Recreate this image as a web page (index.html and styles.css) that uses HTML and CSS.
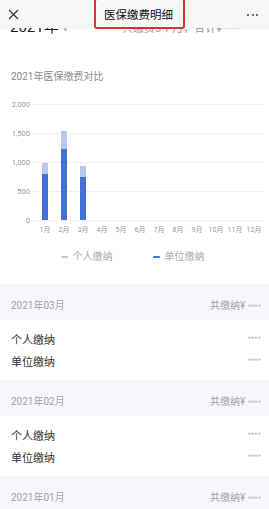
FILE: index.html
```html
<!DOCTYPE html>
<html lang="zh">
<head>
<meta charset="utf-8">
<link rel="stylesheet" href="styles.css">
</head>
<body>
<div class="page">
  <header class="nav">
    <svg class="close" width="11" height="11" viewBox="0 0 11 11"><path d="M1 1L10 10M10 1L1 10" stroke="#333" stroke-width="1.2" fill="none"/></svg>
    <span class="title">医保缴费明细</span>
    <span class="dots"><i></i><i></i><i></i></span>
  </header>

  <div class="summary">
    <span class="year">2021年 <span class="caret">˅</span></span>
    <span class="total">共缴费3个月，合计¥****</span>
  </div>

  <section class="chart">
    <div class="chart-title">2021年医保缴费对比</div>
    <svg class="plot" width="269" height="145" viewBox="0 0 269 145">
      <g stroke="#cfcfcf" stroke-width="0.8" stroke-dasharray="1 1.4">
        <line x1="34" y1="8.5" x2="263" y2="8.5"/>
        <line x1="34" y1="37.5" x2="263" y2="37.5"/>
        <line x1="34" y1="66.5" x2="263" y2="66.5"/>
        <line x1="34" y1="95.5" x2="263" y2="95.5"/>
        <line x1="34" y1="124.5" x2="263" y2="124.5"/>
      </g>
      <g class="ylab" text-anchor="end">
        <text x="30" y="11">2,000</text>
        <text x="30" y="40">1,500</text>
        <text x="30" y="69">1,000</text>
        <text x="30" y="98">500</text>
        <text x="30" y="127">0</text>
      </g>
      <g>
        <rect x="42" y="67" width="6" height="11" fill="#b7c7ee"/>
        <rect x="42" y="78" width="6" height="46" fill="#4570d8"/>
        <rect x="61" y="35" width="6" height="18" fill="#b7c7ee"/>
        <rect x="61" y="53" width="6" height="71" fill="#4570d8"/>
        <rect x="80" y="70" width="6" height="11" fill="#b7c7ee"/>
        <rect x="80" y="81" width="6" height="43" fill="#4570d8"/>
      </g>
      <g class="xlab" text-anchor="middle">
        <text x="45" y="136">1月</text>
        <text x="64" y="136">2月</text>
        <text x="83" y="136">3月</text>
        <text x="102" y="136">4月</text>
        <text x="121" y="136">5月</text>
        <text x="140" y="136">6月</text>
        <text x="159" y="136">7月</text>
        <text x="178" y="136">8月</text>
        <text x="197" y="136">9月</text>
        <text x="216" y="136">10月</text>
        <text x="235" y="136">11月</text>
        <text x="254" y="136">12月</text>
      </g>
    </svg>
    <div class="legend">
      <span class="key"><i class="swatch light"></i>个人缴纳</span>
      <span class="key"><i class="swatch dark"></i>单位缴纳</span>
    </div>
  </section>

  <section class="month">
    <div class="month-head"><span>2021年03月</span><span class="sum">共缴纳¥ <em>****</em></span></div>
    <div class="rows">
      <div class="row"><span>个人缴纳</span><span class="amt">****</span></div>
      <div class="row"><span>单位缴纳</span><span class="amt">****</span></div>
    </div>
  </section>

  <section class="month">
    <div class="month-head"><span>2021年02月</span><span class="sum">共缴纳¥ <em>****</em></span></div>
    <div class="rows">
      <div class="row"><span>个人缴纳</span><span class="amt">****</span></div>
      <div class="row"><span>单位缴纳</span><span class="amt">****</span></div>
    </div>
  </section>

  <section class="month">
    <div class="month-head"><span>2021年01月</span><span class="sum">共缴纳¥ <em>****</em></span></div>
  </section>
</div>
</body>
</html>
```

FILE: styles.css
```css
html, body {
  margin: 0;
  padding: 0;
  background: #fff;
}
body {
  width: 269px;
  height: 509px;
  overflow: hidden;
  font-family: Roboto, "Noto Sans CJK SC", sans-serif;
  color: #333;
}
.page {
  position: relative;
  width: 269px;
}
.nav {
  position: absolute;
  top: 0;
  left: 0;
  right: 0;
  height: 28px;
  background: #f7f7f7;
  box-shadow: 0 1px 2px rgba(0, 0, 0, 0.06);
  display: flex;
  align-items: center;
  justify-content: center;
  z-index: 2;
}
.close {
  position: absolute;
  left: 8px;
  top: 9px;
}
.title {
  position: relative;
  font-size: 11.5px;
  font-weight: 400;
  color: #111;
  line-height: 16px;
  margin-top: 2px;
  margin-left: 8px;
}
.title::after {
  content: "";
  position: absolute;
  left: -10px;
  right: -12px;
  top: -9px;
  bottom: -6px;
  border: 2.5px solid #d8342c;
  border-radius: 3px;
}
.dots {
  position: absolute;
  right: 11px;
  top: 14px;
  display: flex;
  gap: 2.5px;
}
.dots i {
  width: 2px;
  height: 2px;
  border-radius: 50%;
  background: #444;
}
.summary {
  display: flex;
  justify-content: space-between;
  align-items: baseline;
  padding: 18px 28px 14px 10px;
  line-height: 18px;
  height: 18px;
}
.year {
  font-size: 15px;
  color: #222;
}
.caret {
  font-size: 10px;
  color: #999;
}
.total {
  font-size: 11px;
  color: #999;
}
.chart {
  padding-top: 20px;
}
.chart-title {
  font-size: 10px;
  line-height: 14px;
  color: #888;
  padding-left: 11px;
}
.plot {
  display: block;
  margin-top: 12px;
}
.ylab text {
  font-size: 7.5px;
  fill: #999;
}
.xlab text {
  font-size: 7px;
  fill: #999;
}
.legend {
  margin-top: 9px;
  display: flex;
  justify-content: center;
  gap: 40px;
  font-size: 10px;
  line-height: 14px;
  color: #aaa;
  padding-right: 4px;
}
.key {
  display: flex;
  align-items: center;
  gap: 5px;
}
.swatch {
  width: 7px;
  height: 2px;
  border-radius: 1px;
}
.swatch.light { background: #b7c7ee; }
.swatch.dark { background: #4570d8; }
.month {
  display: block;
}
.chart + .month {
  margin-top: 20px;
}
.month-head {
  display: flex;
  justify-content: space-between;
  align-items: center;
  background: #f4f6f9;
  padding: 13px 8px 5px 11px;
  line-height: 18px;
  height: 18px;
  font-size: 10px;
  color: #a3a3a3;
}
.sum em {
  font-style: normal;
  font-size: 7px;
  color: #bbb;
  letter-spacing: 0.3px;
}
.rows {
  padding: 8px 8px 8px 11px;
}
.row {
  display: flex;
  justify-content: space-between;
  align-items: center;
  height: 22px;
  font-size: 11px;
  color: #333;
}
.amt {
  font-size: 7px;
  color: #bbb;
  letter-spacing: 0.3px;
}
```
